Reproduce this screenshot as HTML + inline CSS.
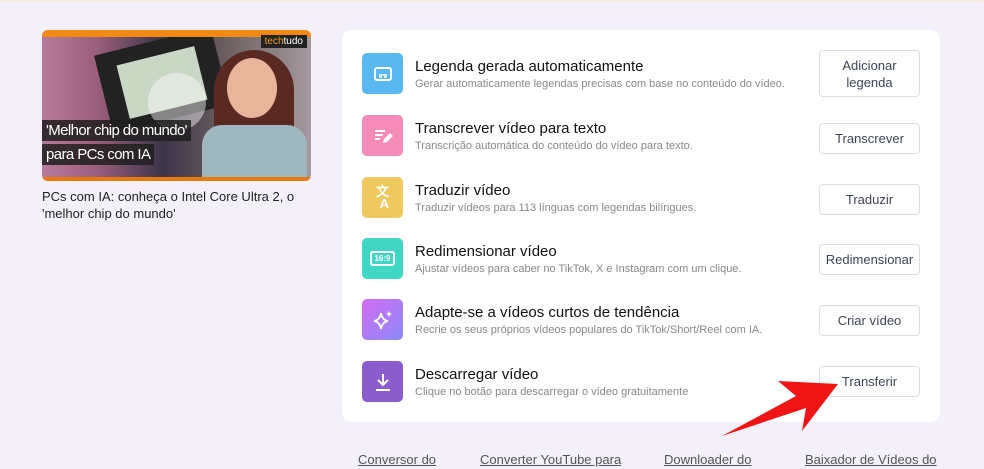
<!DOCTYPE html>
<html><head><meta charset="utf-8"><style>
*{margin:0;padding:0;box-sizing:border-box}
body{width:984px;height:469px;overflow:hidden;background:#f4f0f9;font-family:"Liberation Sans",sans-serif;position:relative;color:#1a1a1a}
.thumb{position:absolute;left:42px;top:30px;width:269px;height:151px;border-radius:6px;overflow:hidden;background:linear-gradient(90deg,#b77a9c 0%,#9c5f7e 20%,#3c3448 45%,#6f6262 70%,#a69aa0 100%)}
.thumb .bar{position:absolute;left:0;top:0;right:0;height:7px;background:#f08a14}
.thumb .bot{position:absolute;left:0;bottom:0;right:0;height:4px;background:#e67a10}
.face{position:absolute;left:185px;top:28px;width:50px;height:60px;border-radius:50%;background:#e8b49c}
.hair{position:absolute;left:172px;top:20px;width:80px;height:120px;border-radius:40px 40px 10px 10px;background:#5a2a22}
.shirt{position:absolute;left:160px;top:95px;width:105px;height:56px;border-radius:20px 20px 0 0;background:#9fb8c0}
.box{position:absolute;left:60px;top:10px;width:120px;height:80px;background:#222;transform:rotate(-14deg)}
.box2{position:absolute;left:80px;top:25px;width:80px;height:55px;background:#c8d8c4;transform:rotate(-14deg)}
.play{position:absolute;left:106px;top:43px;width:58px;height:58px;border-radius:50%;background:rgba(255,255,255,.45)}
.cap{position:absolute;left:0;background:rgba(30,30,30,.85);color:#fff;font-size:15px;letter-spacing:-.6px;padding:2px 4px}
.tt{position:absolute;right:4px;top:5px;background:#222;color:#fff;font-size:10px;padding:1px 4px}
.tt b{color:#f29a1a;font-weight:normal}
.desc{position:absolute;left:42px;top:188px;width:270px;font-size:13px;line-height:17px;color:#222}
.card{position:absolute;left:342px;top:30px;width:598px;height:392px;background:#fff;border-radius:10px}
.row{position:absolute;left:20px;height:41px;width:560px}
.ic{position:absolute;left:0;top:0;width:41px;height:41px;border-radius:5px;display:flex;align-items:center;justify-content:center}
.t{position:absolute;left:53px;top:5px;font-size:15px;color:#111;white-space:nowrap}
.s{position:absolute;left:53px;top:25px;font-size:11px;color:#888;white-space:nowrap}
.btn{position:absolute;left:477px;width:101px;height:31px;border:1px solid #ddd;border-radius:4px;background:#fff;font-size:13px;color:#3d4456;display:flex;align-items:center;justify-content:center;text-align:center;line-height:17px}
.links{position:absolute;top:452px;font-size:13px;color:#555;text-decoration:underline}
</style></head><body>
<div style="position:absolute;left:0;top:0;width:984px;height:2px;background:#f7eadf"></div>
<div class="thumb">
<div class="box"></div><div class="box2"></div>
<div class="hair"></div><div class="face"></div><div class="shirt"></div>
<div class="play"></div>
<div class="bar"></div><div class="bot"></div>
<div class="tt"><b>tech</b>tudo</div>
<div class="cap" style="top:90px">'Melhor chip do mundo'</div>
<div class="cap" style="top:114px">para PCs com IA</div>
</div>
<div class="desc">PCs com IA: conheça o Intel Core Ultra 2, o 'melhor chip do mundo'</div>
<div class="card">
<div class="row" style="top:23px"><div class="ic" style="background:#5ab8f0"><svg width="18" height="14"><rect x="1" y="1" width="16" height="12" rx="2" fill="none" stroke="#fff" stroke-width="2"/><path d="M5 8h8M5 10h3M10 10h3" stroke="#fff" stroke-width="1.5"/></svg></div><div class="t">Legenda gerada automaticamente</div><div class="s">Gerar automaticamente legendas precisas com base no conteúdo do vídeo.</div></div>
<div class="btn" style="top:20px;height:47px">Adicionar<br>legenda</div>
<div class="row" style="top:85px"><div class="ic" style="background:#f48bb8"><svg width="20" height="18"><path d="M2 4h10M2 8h8M2 12h5" stroke="#fff" stroke-width="2"/><path d="M10 16l1-4 6-6 3 3-6 6z" fill="#fff"/></svg></div><div class="t">Transcrever vídeo para texto</div><div class="s">Transcrição automática do conteúdo do vídeo para texto.</div></div>
<div class="btn" style="top:93px">Transcrever</div>
<div class="row" style="top:147px"><div class="ic" style="background:#f0c860"><span style="color:#fff;font-size:13px;font-weight:bold;line-height:12px">文<br>&nbsp;A</span></div><div class="t">Traduzir vídeo</div><div class="s">Traduzir vídeos para 113 línguas com legendas bilíngues.</div></div>
<div class="btn" style="top:154px">Traduzir</div>
<div class="row" style="top:208px"><div class="ic" style="background:#3fd6c4"><span style="border:2px solid #fff;border-radius:3px;color:#fff;font-size:8px;padding:1px 2px;font-weight:bold">16:9</span></div><div class="t">Redimensionar vídeo</div><div class="s">Ajustar vídeos para caber no TikTok, X e Instagram com um clique.</div></div>
<div class="btn" style="top:214px">Redimensionar</div>
<div class="row" style="top:269px"><div class="ic" style="background:linear-gradient(135deg,#d46cf2,#8a8af8)"><svg width="22" height="22"><path d="M9 4Q10 11 16 12Q10 13 9 20Q8 13 2 12Q8 11 9 4Z" fill="none" stroke="#fff" stroke-width="1.8"/><path d="M17 2l1 2 2 1-2 1-1 2-1-2-2-1 2-1z" fill="#fff"/></svg></div><div class="t">Adapte-se a vídeos curtos de tendência</div><div class="s">Recrie os seus próprios vídeos populares do TikTok/Short/Reel com IA.</div></div>
<div class="btn" style="top:275px">Criar vídeo</div>
<div class="row" style="top:331px"><div class="ic" style="background:#8a5ccc"><svg width="20" height="20"><path d="M10 2v11M5 8l5 5 5-5M3 18h14" fill="none" stroke="#fff" stroke-width="2"/></svg></div><div class="t">Descarregar vídeo</div><div class="s">Clique no botão para descarregar o vídeo gratuitamente</div></div>
<div class="btn" style="top:336px">Transferir</div>
</div>
<svg style="position:absolute;left:0;top:0" width="984" height="469"><path d="M838 384L778 381L796 396L722 436L806 408L802 431Z" fill="#f01414"/></svg>
<div class="links" style="left:358px">Conversor do</div>
<div class="links" style="left:480px">Converter YouTube para</div>
<div class="links" style="left:664px">Downloader do</div>
<div class="links" style="left:805px">Baixador de Vídeos do</div>
</body></html>
